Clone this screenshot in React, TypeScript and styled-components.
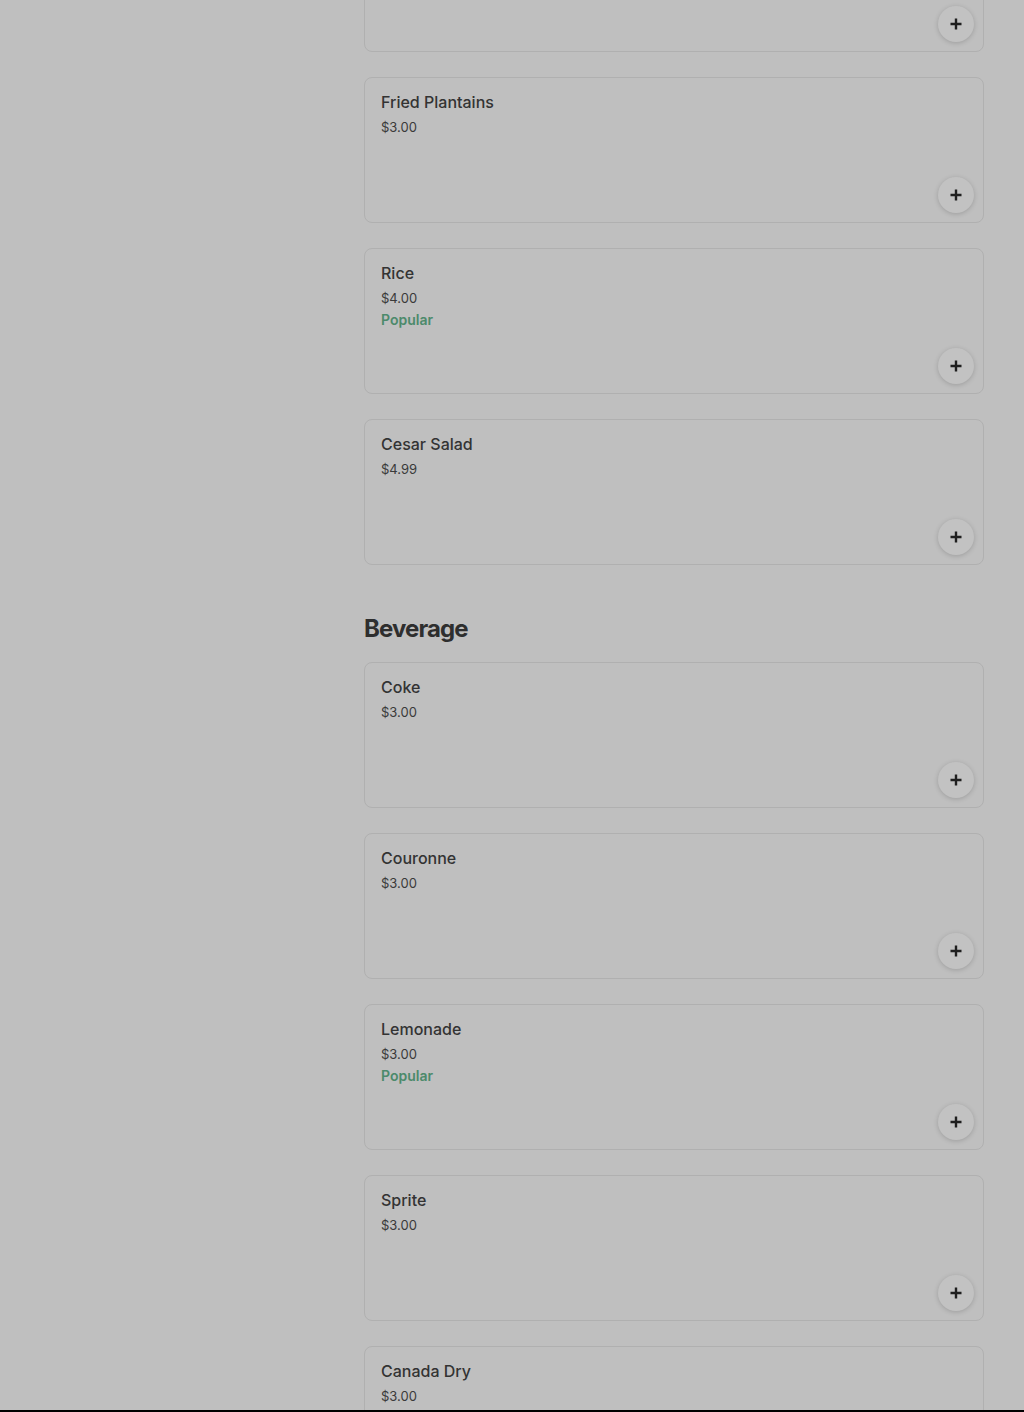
import React from "react";
import styled, { createGlobalStyle } from "styled-components";

const Global = createGlobalStyle`
  html, body { margin: 0; padding: 0; background: #bfbfbf; }
  body { font-family: Inter, "Noto Sans", sans-serif; overflow: hidden; }
`;

const Page = styled.div`
  display: grid;
  grid-template-columns: 324px 620px;
  column-gap: 40px;
  margin-top: -94px;
  height: 1506px;
  overflow: hidden;
`;

const Sidebar = styled.aside``;

const Content = styled.main`
  display: flex;
  flex-direction: column;
`;

const Section = styled.section`
  display: flex;
  flex-direction: column;
  gap: 25px;
  & + & { margin-top: 48px; }
`;

const Heading = styled.h2`
  margin: 0 0 -8px;
  font-family: Inter, sans-serif;
  font-weight: 700;
  font-size: 24px;
  line-height: 32px;
  letter-spacing: -0.9px;
  color: #2e2e2e;
`;

const Card = styled.div`
  box-sizing: border-box;
  height: 146px;
  border: 1px solid #b0b0b0;
  border-radius: 8px;
  padding: 14px 9px 9px 16px;
  display: flex;
  flex-direction: column;
`;

const Name = styled.div`
  font-size: 16px;
  line-height: 20px;
  font-weight: 500;
  color: #333;
`;

const Price = styled.div`
  margin-top: 6px;
  font-size: 13px;
  line-height: 18px;
  color: #3a3a3a;
`;

const Tag = styled.div`
  margin-top: 4px;
  font-size: 14px;
  line-height: 18px;
  font-weight: 600;
  color: #4c8a6b;
`;

const AddButton = styled.button`
  margin-top: auto;
  align-self: flex-end;
  width: 36px;
  height: 36px;
  border-radius: 50%;
  border: none;
  padding: 0;
  background: #c2c2c2;
  box-shadow: 0 1px 5px rgba(0, 0, 0, 0.18);
  display: flex;
  align-items: center;
  justify-content: center;
`;

const BottomBar = styled.div`
  position: fixed;
  left: 0;
  right: 0;
  bottom: 0;
  height: 2px;
  background: #000;
`;

const Plus = () => (
  <svg width="14" height="14" viewBox="0 0 14 14">
    <path d="M7 1.5v11M1.5 7h11" stroke="#1f1f1f" strokeWidth="2.4" />
  </svg>
);

type Item = { name: string; price: string; popular?: boolean };

const sides: Item[] = [
  { name: "", price: "" },
  { name: "Fried Plantains", price: "$3.00" },
  { name: "Rice", price: "$4.00", popular: true },
  { name: "Cesar Salad", price: "$4.99" },
];

const drinks: Item[] = [
  { name: "Coke", price: "$3.00" },
  { name: "Couronne", price: "$3.00" },
  { name: "Lemonade", price: "$3.00", popular: true },
  { name: "Sprite", price: "$3.00" },
  { name: "Canada Dry", price: "$3.00" },
];

const ItemCard = ({ item }: { item: Item }) => (
  <Card>
    {item.name && <Name>{item.name}</Name>}
    {item.price && <Price>{item.price}</Price>}
    {item.popular && <Tag>Popular</Tag>}
    <AddButton aria-label="Add">
      <Plus />
    </AddButton>
  </Card>
);

export default function App() {
  return (
    <>
      <Global />
      <Page>
        <Sidebar />
        <Content>
          <Section>
            {sides.map((it, i) => (
              <ItemCard key={i} item={it} />
            ))}
          </Section>
          <Section>
            <Heading>Beverage</Heading>
            {drinks.map((it, i) => (
              <ItemCard key={i} item={it} />
            ))}
          </Section>
        </Content>
      </Page>
      <BottomBar />
    </>
  );
}
